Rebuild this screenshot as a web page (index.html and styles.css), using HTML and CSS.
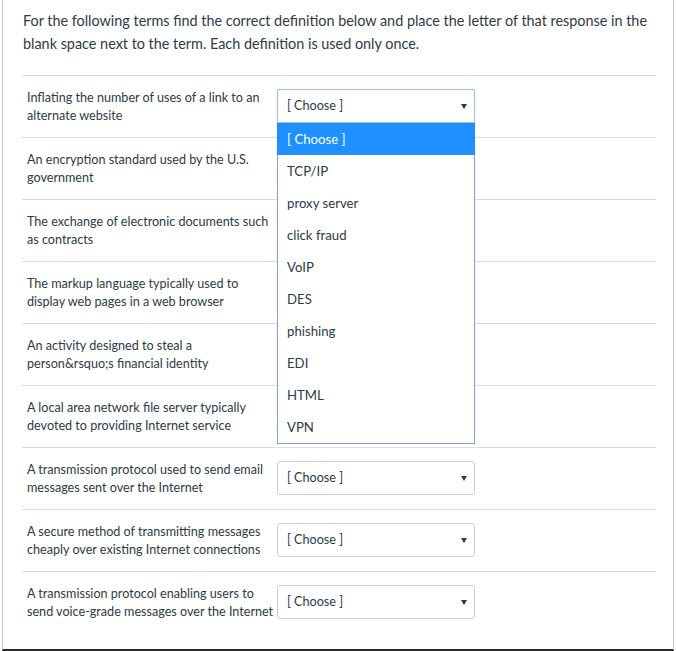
FILE: index.html
```html
<!DOCTYPE html>
<html>
<head>
<meta charset="utf-8">
<link rel="stylesheet" href="styles.css">
</head>
<body>
<div class="card">
  <p class="intro">For the following terms find the correct definition below and place the letter of that response in the blank space next to the term. Each definition is used only once.</p>
  <div class="rows">
    <div class="row">
      <div class="term">Inflating the number of uses of a link to an alternate website</div>
      <div class="select-wrap">
        <div class="select focused"><span>[ Choose ]</span><span class="arrow"></span></div>
        <ul class="dropdown">
          <li class="active">[ Choose ]</li>
          <li>TCP/IP</li>
          <li>proxy server</li>
          <li>click fraud</li>
          <li>VoIP</li>
          <li>DES</li>
          <li>phishing</li>
          <li>EDI</li>
          <li>HTML</li>
          <li>VPN</li>
        </ul>
      </div>
    </div>
    <div class="row">
      <div class="term">An encryption standard used by the U.S. government</div>
      <div class="select-wrap"><div class="select covered"><span>[ Choose ]</span><span class="arrow"></span></div></div>
    </div>
    <div class="row">
      <div class="term">The exchange of electronic documents such as contracts</div>
      <div class="select-wrap"><div class="select covered"><span>[ Choose ]</span><span class="arrow"></span></div></div>
    </div>
    <div class="row">
      <div class="term">The markup language typically used to display web pages in a web browser</div>
      <div class="select-wrap"><div class="select covered"><span>[ Choose ]</span><span class="arrow"></span></div></div>
    </div>
    <div class="row">
      <div class="term">An activity designed to steal a person&amp;rsquo;s financial identity</div>
      <div class="select-wrap"><div class="select covered"><span>[ Choose ]</span><span class="arrow"></span></div></div>
    </div>
    <div class="row">
      <div class="term">A local area network file server typically devoted to providing Internet service</div>
      <div class="select-wrap"><div class="select covered"><span>[ Choose ]</span><span class="arrow"></span></div></div>
    </div>
    <div class="row">
      <div class="term">A transmission protocol used to send email messages sent over the Internet</div>
      <div class="select-wrap"><div class="select"><span>[ Choose ]</span><span class="arrow"></span></div></div>
    </div>
    <div class="row">
      <div class="term">A secure method of transmitting messages cheaply over existing Internet connections</div>
      <div class="select-wrap"><div class="select"><span>[ Choose ]</span><span class="arrow"></span></div></div>
    </div>
    <div class="row">
      <div class="term">A transmission protocol enabling users to send voice-grade messages over the Internet</div>
      <div class="select-wrap"><div class="select"><span>[ Choose ]</span><span class="arrow"></span></div></div>
    </div>
  </div>
</div>
</body>
</html>
```
FILE: styles.css
```css
html, body {
  margin: 0;
  padding: 0;
  background: #fff;
}
body {
  font-family: Lato, "Open Sans", sans-serif;
  color: #2d3b45;
}
.card {
  margin-left: 2px;
  width: 672px;
  height: 651px;
  box-sizing: border-box;
  border-left: 1px solid #c4c8cc;
  border-right: 1px solid #c4c8cc;
  border-bottom: 2px solid #2b2b2b;
  padding: 9px 17px 0 19px;
}
.intro {
  margin: 0 0 20px 0;
  font-size: 14.4px;
  line-height: 23px;
  padding-left: 1px;
}
.row {
  display: flex;
  align-items: center;
  border-top: 1px solid #dadddf;
  padding: 12px 0 13px 5px;
  font-size: 12.6px;
  line-height: 18px;
}
.term {
  width: 248px;
  min-height: 36px;
  padding-top: 1px;
  margin-bottom: -1px;
  display: flex;
  align-items: center;
  margin-right: 2px;
}
.select-wrap {
  position: relative;
  width: 198px;
}
.select {
  height: 34px;
  box-sizing: border-box;
  border: 1px solid #c7cdd1;
  border-radius: 3px;
  background: #fff;
  display: flex;
  align-items: center;
  justify-content: space-between;
  padding: 0 7px 0 9px;
}
.select.covered {
  visibility: hidden;
}
.select.focused {
  border-color: #9ebdec;
  border-radius: 2px 2px 0 0;
  box-shadow: 0 0 1px #b9cff2;
}
.arrow {
  width: 0;
  height: 0;
  border-left: 3px solid transparent;
  border-right: 3px solid transparent;
  border-top: 5px solid #2d3b45;
  margin-top: 1px;
}
.dropdown {
  position: absolute;
  left: 0;
  top: 34px;
  width: 198px;
  box-sizing: border-box;
  margin: 0;
  padding: 0;
  list-style: none;
  background: #fff;
  border: 1px solid #7f9fd6;
  border-top: none;
  z-index: 5;
}
.dropdown li {
  height: 32px;
  line-height: 32px;
  padding-left: 9px;
  font-size: 13.2px;
}
.dropdown li.active {
  background: #1e90ff;
  color: #fff;
  margin: 0 -1px;
  padding-left: 10px;
}
```
